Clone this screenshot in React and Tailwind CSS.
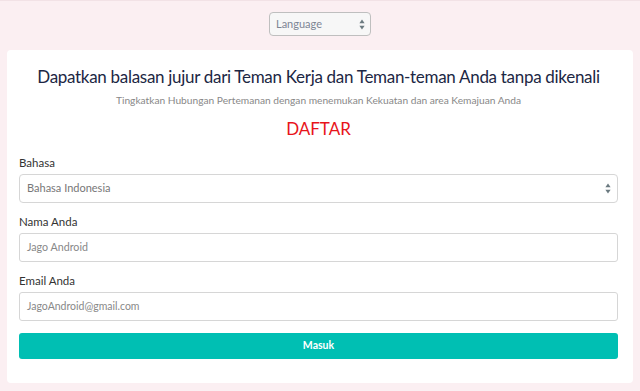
import React from "react";

const Arrows = () => (
    <svg width="6" height="11" viewBox="0 0 6 11">
        <path d="M3 0.5 L5.6 4.3 H0.4 Z" fill="#6b7a80" />
        <path d="M3 10.5 L5.6 6.7 H0.4 Z" fill="#6b7a80" />
    </svg>
);

const Field = ({ label, children }) => (
    <div className="flex flex-col">
        <label className="text-[11.5px] leading-[14px] text-[#333] mb-[4px]">{label}</label>
        {children}
    </div>
);

export default function App() {
    return (
        <div className="w-[640px] h-[391px] bg-[#fbeff2] border-t border-[#f2e2e6] flex flex-col items-center overflow-hidden" style={{ fontFamily: "Lato, 'Open Sans', sans-serif" }}>
            {/* Language switch */}
            <div className="mt-[11px] w-[102px] h-[24px] rounded-[4px] border border-[#bfbfbf] bg-[#f7f7f7] flex items-center justify-between pl-[6px] pr-[5px]">
                <span className="text-[11px] text-[#7d8594]">Language</span>
                <Arrows />
            </div>

            {/* Card */}
            <div className="mt-[14px] w-[626px] h-[333px] bg-white rounded-[4px] pl-[12px] pr-[15px] flex flex-col">
                <h1 className="mt-[16px] text-center whitespace-nowrap text-[17px] tracking-[-0.3px] leading-[22px] text-[#1c2744]">
                    Dapatkan balasan jujur dari Teman Kerja dan Teman-teman Anda tanpa dikenali
                </h1>
                <p className="mt-[6px] text-center text-[10.2px] leading-[12px] text-[#888]">
                    Tingkatkan Hubungan Pertemanan dengan menemukan Kekuatan dan area Kemajuan Anda
                </p>
                <p className="mt-[13px] text-center text-[17px] leading-[20px] text-[#e8141b]">DAFTAR</p>

                <div className="mt-[17px] flex flex-col gap-[12px]">
                    <Field label="Bahasa">
                        <div className="h-[29px] rounded-[4px] border border-[#d6d6d6] flex items-center justify-between pl-[7px] pr-[6px]">
                            <span className="text-[11px] text-[#777]">Bahasa Indonesia</span>
                            <Arrows />
                        </div>
                    </Field>
                    <Field label="Nama Anda">
                        <div className="h-[29px] rounded-[3px] border border-[#d6d6d6] flex items-center pl-[7px]">
                            <span className="text-[10.7px] text-[#888]">Jago Android</span>
                        </div>
                    </Field>
                    <Field label="Email Anda">
                        <div className="h-[29px] rounded-[3px] border border-[#d6d6d6] flex items-center pl-[7px]">
                            <span className="text-[10.5px] text-[#888]">JagoAndroid@gmail.com</span>
                        </div>
                    </Field>
                </div>

                <button className="mt-[12px] h-[26px] rounded-[3px] bg-[#00bfb3] text-white text-[10.5px] font-bold flex items-center justify-center">
                    Masuk
                </button>
            </div>
        </div>
    );
}
